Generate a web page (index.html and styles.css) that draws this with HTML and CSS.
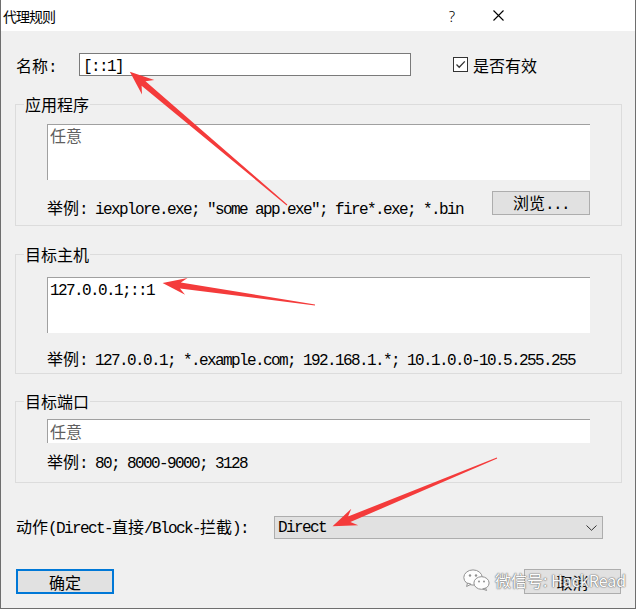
FILE: index.html
```html
<!DOCTYPE html>
<html lang="zh-CN">
<head>
  <meta charset="UTF-8" />
  <meta name="viewport" content="width=device-width, initial-scale=1.0"/>
  <title>代理规则</title>
  <link rel="stylesheet" href="styles.css">
</head>
<body>
  <div class="dialog">
    <div class="titlebar">
      <span class="title">代理规则</span>
      <span class="help">?</span>
      <span class="close">
        <svg width="11" height="11" viewBox="0 0 11 11"><path d="M0.5 0.5 L10.5 10.5 M10.5 0.5 L0.5 10.5" stroke="#000" stroke-width="1.1" fill="none"/></svg>
      </span>
    </div>

    <div class="content">
      <div class="name-row">
        <span class="name-label">名称<span class="latin">:</span></span>
        <div class="name-input"><span class="latin">[::1]</span></div>
        <label class="check">
          <span class="box">
            <svg width="13" height="13" viewBox="0 0 13 13"><path d="M2.5 6.5 L5.2 9.2 L10.8 3.4" stroke="#333" stroke-width="1.3" fill="none"/></svg>
          </span>
          是否有效
        </label>
      </div>

      <div class="group group-app">
        <span class="group-title">应用程序</span>
        <div class="field tall placeholder">任意</div>
        <div class="example-row">
          <span class="example">举例<span class="latin">: iexplore.exe; "some app.exe"; fire*.exe; *.bin</span></span>
          <button class="btn browse">浏览<span class="latin">...</span></button>
        </div>
      </div>

      <div class="group group-host">
        <span class="group-title">目标主机</span>
        <div class="field tall"><span class="latin">127.0.0.1;::1</span></div>
        <div class="example">举例<span class="latin">: 127.0.0.1; *.example.com; 192.168.1.*; 10.1.0.0-10.5.255.255</span></div>
      </div>

      <div class="group group-port">
        <span class="group-title">目标端口</span>
        <div class="field short placeholder">任意</div>
        <div class="example">举例<span class="latin">: 80; 8000-9000; 3128</span></div>
      </div>

      <div class="action-row">
        <span>动作<span class="latin">(Direct-</span>直接<span class="latin">/Block-</span>拦截<span class="latin">):</span></span>
        <div class="select">
          <span class="latin">Direct</span>
          <svg width="11" height="6" viewBox="0 0 11 6"><path d="M0.5 0.5 L5.5 5.3 L10.5 0.5" stroke="#333" stroke-width="1" fill="none"/></svg>
        </div>
      </div>

      <div class="button-row">
        <button class="btn ok">确定</button>
        <button class="btn cancel">取消</button>
      </div>
    </div>

    <div class="watermark">
      <svg width="27" height="22" viewBox="0 0 27 22">
        <ellipse cx="10" cy="8.5" rx="9.2" ry="7.6" fill="#fff" stroke="#8a8a8a" stroke-width="1"/>
        <path d="M4.5 14 L3.6 17.5 L8 15.2 Z" fill="#fff" stroke="#8a8a8a" stroke-width="1"/>
        <circle cx="7" cy="6.5" r="1.2" fill="#8a8a8a"/>
        <circle cx="13" cy="6.5" r="1.2" fill="#8a8a8a"/>
        <ellipse cx="18.5" cy="14" rx="7.6" ry="6.3" fill="#fff" stroke="#8a8a8a" stroke-width="1"/>
        <path d="M22.5 19 L23.6 21.5 L19.8 20 Z" fill="#fff" stroke="#8a8a8a" stroke-width="1"/>
        <circle cx="16" cy="12.5" r="1" fill="#8a8a8a"/>
        <circle cx="21" cy="12.5" r="1" fill="#8a8a8a"/>
      </svg>
      <span>微信号: HackRead</span>
    </div>

    <svg class="arrows" width="636" height="609" viewBox="0 0 636 609">
      <polygon points="0,-0.5 188,-3 182,-9.5 206,0 182,9.5 188,3 0,0.5" transform="translate(287 205) rotate(-139.73)"/>
      <polygon points="0,-0.5 136,-3 130,-8.5 154,0 130,8.5 136,3 0,0.5" transform="translate(315 305) rotate(-171.76)"/>
      <polygon points="0,-0.5 160,-3 154,-9 178,0 154,9 160,3 0,0.5" transform="translate(497 458) rotate(157.48)"/>
    </svg>
  </div>
</body>
</html>
```

FILE: styles.css
```css
* {
  box-sizing: border-box;
}

body {
  margin: 0;
  background: #fff;
  font-family: "Noto Sans CJK SC", "Liberation Mono", monospace;
  font-size: 16px;
  color: #000;
}

.latin {
  font-family: "Liberation Mono", "Noto Sans CJK SC", monospace;
  letter-spacing: -1.6px;
}

.dialog {
  position: relative;
  width: 636px;
  height: 609px;
  background: #f0f0f0;
  border: 1px solid #6e6e6e;
  border-top: none;
  overflow: hidden;
}

/* title bar */
.titlebar {
  height: 31px;
  background: #fff;
  display: flex;
  align-items: center;
  padding-left: 2px;
}

.title {
  font-size: 14px;
  line-height: 16px;
  letter-spacing: -1px;
}

.help {
  margin-left: auto;
  width: 46px;
  text-align: center;
  font-family: "Noto Sans", sans-serif;
  font-size: 15px;
  font-weight: 300;
}

.close {
  width: 46px;
  display: flex;
  justify-content: center;
  margin-right: 114px;
}

/* main area */
.content {
  padding: 22px 13px 0 14px;
}

.name-row {
  display: flex;
  align-items: center;
  height: 23px;
  padding-left: 1px;
}

.name-label {
  width: 63px;
  height: 16px;
  line-height: 16px;
}

.name-input {
  width: 332px;
  height: 23px;
  background: #fff;
  border: 1px solid #7a7a7a;
  padding: 0 3px;
  line-height: 21px;
}

.check {
  display: flex;
  align-items: center;
  gap: 5px;
  margin-left: 42px;
  height: 16px;
  line-height: 16px;
}

.check .box {
  width: 15px;
  height: 15px;
  border: 1px solid #333;
  background: #fff;
  display: flex;
  align-items: center;
  justify-content: center;
}

/* group boxes */
.group {
  position: relative;
  border: 1px solid #dcdcdc;
  padding: 0 31px;
}

.group-title {
  position: absolute;
  top: -11px;
  left: 8px;
  padding: 0 1px;
  height: 20px;
  line-height: 20px;
  background: #f0f0f0;
}

.group-app {
  margin-top: 28px;
  padding-top: 19px;
  padding-bottom: 10px;
}

.group-host {
  margin-top: 28px;
  padding-top: 22px;
  padding-bottom: 7px;
}

.group-port {
  margin-top: 27px;
  padding-top: 17px;
  padding-bottom: 13px;
}

.field {
  background: #fff;
  border-top: 1px solid #a0a0a0;
  border-left: 1px solid #a0a0a0;
  padding: 1px 2px;
  line-height: 18px;
}

.field.tall {
  height: 56px;
}

.field.short {
  height: 24px;
  padding-top: 2px;
}

.placeholder {
  color: #5f5f5f;
}

.example {
  display: block;
  height: 16px;
  line-height: 16px;
  white-space: nowrap;
}

.group-host .example {
  margin-top: 17px;
}

.group-port .example {
  margin-top: 10px;
}

.example-row {
  display: flex;
  justify-content: space-between;
  align-items: flex-end;
  height: 24px;
  margin-top: 11px;
}

/* buttons */
.btn {
  font-family: inherit;
  font-size: 16px;
  color: #000;
  background: #e1e1e1;
  border: 1px solid #adadad;
  padding: 0;
  line-height: 16px;
}

.browse {
  width: 98px;
  height: 24px;
}

.action-row {
  display: flex;
  align-items: center;
  height: 23px;
  margin-top: 33px;
  padding: 0 19px 0 1px;
  line-height: 16px;
}

.select {
  margin-left: auto;
  width: 329px;
  height: 23px;
  background: #e1e1e1;
  border: 1px solid #adadad;
  display: flex;
  align-items: center;
  justify-content: space-between;
  padding: 0 5px 0 3px;
}

.button-row {
  display: flex;
  justify-content: space-between;
  height: 25px;
  margin-top: 30px;
  padding: 0 1px;
}

.ok {
  width: 98px;
  height: 25px;
  border: 2px solid #0078d7;
}

.cancel {
  width: 97px;
  height: 25px;
}

/* overlays */
.watermark {
  position: absolute;
  left: 462px;
  top: 569px;
  display: flex;
  align-items: center;
  gap: 5px;
  opacity: 0.92;
  color: #fff;
  font-family: "Noto Sans CJK SC", sans-serif;
  font-size: 16px;
  line-height: 22px;
  text-shadow: 0 0 1px #666, 0 0 1px #666, 0 0 2px #888;
}

.arrows {
  position: absolute;
  left: -1px;
  top: 0;
  pointer-events: none;
  fill: #f43b3b;
}
```
